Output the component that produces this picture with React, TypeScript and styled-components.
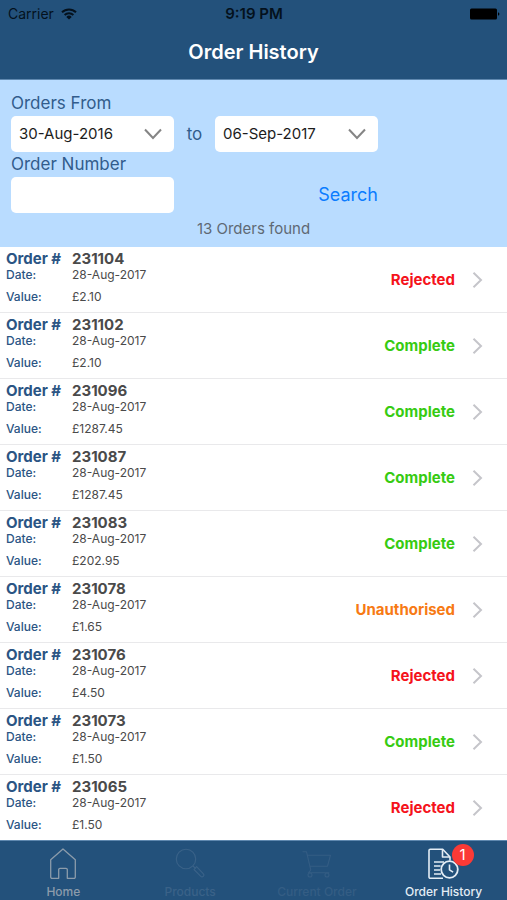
import React, { useState } from "react";
import styled, { createGlobalStyle } from "styled-components";

const GlobalStyle = createGlobalStyle`
  *, *::before, *::after { box-sizing: border-box; }
  body { margin: 0; background: #ffffff; }
  body, button, input, select { font-family: Inter, "Liberation Sans", sans-serif; }
`;

const navy = "#23517b";
const rule = "#5f88af";

const Screen = styled.div`
  display: flex;
  flex-direction: column;
  height: 100vh;
  overflow: hidden;
`;

const Header = styled.header`
  flex: none;
  background: ${navy};
  border-bottom: 1px solid ${rule};
`;

const StatusBar = styled.div`
  display: grid;
  grid-template-columns: 1fr auto 1fr;
  align-items: center;
  height: 27px;
  padding: 0 7px 0 8px;
  font-size: 14px;
  line-height: 16px;
  color: #04111d;
`;

const Carrier = styled.span`
  display: flex;
  align-items: center;
  gap: 7px;
`;

const Clock = styled.span`
  font-size: 15px;
  font-weight: 600;
`;

const Battery = styled.svg`
  justify-self: end;
`;

const Title = styled.h1`
  margin: 0;
  padding: 12px 0 14px;
  font-size: 20px;
  line-height: 26px;
  font-weight: 600;
  text-align: center;
  color: #ffffff;
`;

const Filters = styled.form`
  flex: none;
  padding: 12px 11px 8px;
  background: #b9dcff;
`;

const FilterGrid = styled.div`
  display: grid;
  grid-template-columns: 163px 41px 163px;
  row-gap: 1px;
  align-items: center;
`;

const FieldLabel = styled.label`
  grid-column: 1 / -1;
  height: 23px;
  font-size: 17px;
  line-height: 22px;
  color: #325c8c;
`;

const To = styled.span`
  font-size: 17px;
  line-height: 22px;
  text-align: center;
  color: #325c8c;
`;

const SelectWrap = styled.div`
  position: relative;
`;

const DateSelect = styled.select`
  display: block;
  width: 100%;
  height: 36px;
  padding: 0 36px 2px 8px;
  border: 0;
  border-radius: 5px;
  appearance: none;
  background: #ffffff;
  font-size: 15px;
  color: #1c1c1c;
`;

const SelectArrow = styled.svg`
  position: absolute;
  right: 12px;
  top: 12px;
  pointer-events: none;
`;

const NumberInput = styled.input`
  width: 100%;
  height: 36px;
  padding: 0 8px;
  border: 0;
  border-radius: 5px;
  background: #ffffff;
  font-size: 15px;
  color: #1c1c1c;
`;

const SearchButton = styled.button`
  grid-column: 3;
  justify-self: end;
  padding: 0;
  border: 0;
  background: none;
  font-size: 18px;
  line-height: 24px;
  color: #0b7cff;
  cursor: pointer;
`;

const Found = styled.p`
  margin: 6px 0 0;
  font-size: 15px;
  line-height: 20px;
  text-align: center;
  color: #5f6974;
`;

const OrderList = styled.ul`
  flex: 1;
  min-height: 0;
  margin: 0;
  padding: 0;
  list-style: none;
  overflow-y: auto;
  scrollbar-width: none;
`;

const OrderItem = styled.li`
  border-bottom: 1px solid #e9e9eb;
`;

const OrderLink = styled.a`
  display: flex;
  align-items: center;
  height: 65px;
  padding: 0 24px 0 6px;
  text-decoration: none;
`;

const Details = styled.dl`
  flex: 1;
  display: grid;
  grid-template-columns: 66px 1fr;
  grid-template-rows: 16px 22px 16px;
  margin: 0 0 3px;
  line-height: 16px;
`;

const Term = styled.dt<{ $lead?: boolean }>`
  font-size: ${(p) => (p.$lead ? 15 : 12)}px;
  font-weight: ${(p) => (p.$lead ? 700 : 500)};
  color: #2b5584;
`;

const Value = styled.dd<{ $lead?: boolean }>`
  margin: 0;
  font-size: ${(p) => (p.$lead ? 15 : 12)}px;
  font-weight: ${(p) => (p.$lead ? 700 : 400)};
  color: #4a4a4a;
`;

type Status = "Rejected" | "Complete" | "Unauthorised";

const statusColour: Record<Status, string> = {
  Rejected: "#f5121b",
  Complete: "#37cb12",
  Unauthorised: "#f77a14",
};

const StatusText = styled.span<{ $status: Status }>`
  margin-right: 17px;
  font-size: 15px;
  line-height: 20px;
  font-weight: 700;
  color: ${(p) => statusColour[p.$status]};
`;

const TabBar = styled.nav`
  flex: none;
  display: grid;
  grid-template-columns: repeat(4, 1fr);
  height: 60px;
  background: ${navy};
  border-top: 1px solid ${rule};
`;

const Tab = styled.a<{ $tone: string }>`
  display: flex;
  flex-direction: column;
  align-items: center;
  padding-top: 7px;
  font-size: 12px;
  line-height: 16px;
  font-weight: 500;
  white-space: nowrap;
  text-decoration: none;
  color: ${(p) => p.$tone};
`;

const TabIcon = styled.span`
  position: relative;
  display: block;
  height: 36px;

  svg { display: block; }
`;

const Badge = styled.span`
  position: absolute;
  left: 24px;
  top: -4px;
  width: 22px;
  height: 22px;
  border-radius: 50%;
  background: #fb3a36;
  font-size: 15px;
  line-height: 22px;
  font-weight: 400;
  text-align: center;
  color: #ffffff;
`;

interface Order {
  id: string;
  date: string;
  value: string;
  status: Status;
}

const orders: Order[] = [
  { id: "231104", date: "28-Aug-2017", value: "£2.10", status: "Rejected" },
  { id: "231102", date: "28-Aug-2017", value: "£2.10", status: "Complete" },
  { id: "231096", date: "28-Aug-2017", value: "£1287.45", status: "Complete" },
  { id: "231087", date: "28-Aug-2017", value: "£1287.45", status: "Complete" },
  { id: "231083", date: "28-Aug-2017", value: "£202.95", status: "Complete" },
  { id: "231078", date: "28-Aug-2017", value: "£1.65", status: "Unauthorised" },
  { id: "231076", date: "28-Aug-2017", value: "£4.50", status: "Rejected" },
  { id: "231073", date: "28-Aug-2017", value: "£1.50", status: "Complete" },
  { id: "231065", date: "28-Aug-2017", value: "£1.50", status: "Rejected" },
];

const WifiIcon = () => (
  <svg width="16" height="12" viewBox="0 0 16 12" fill="none" stroke="currentColor" aria-hidden="true">
    <path d="M1 4.3a10 10 0 0 1 14 0" strokeWidth="2" />
    <path d="M3.6 7a6.3 6.3 0 0 1 8.8 0" strokeWidth="1.9" />
    <path d="M8 11.6 5.3 8.9a3.9 3.9 0 0 1 5.4 0Z" fill="currentColor" stroke="none" />
  </svg>
);

const BatteryIcon = () => (
  <Battery width="30" height="12" viewBox="0 0 30 12" fill="#000" role="img" aria-label="Battery full">
    <rect x="0" y="0.5" width="27" height="11" rx="1.5" />
    <path d="M28 4.3c1.9.4 1.9 3 0 3.4Z" />
  </Battery>
);

const DownArrow = () => (
  <SelectArrow width="18" height="12" viewBox="0 0 18 12" fill="none" stroke="#858585" strokeWidth="2" aria-hidden="true">
    <path d="M1 1.5 9 10l8-8.5" />
  </SelectArrow>
);

const RowArrow = () => (
  <svg width="11" height="18" viewBox="0 0 11 18" fill="none" stroke="#c5c5ca" strokeWidth="2" aria-hidden="true">
    <path d="m1.5 1.7 7.5 7.3-7.5 7.3" />
  </svg>
);

const HomeIcon = () => (
  <svg width="28" height="32" viewBox="0 0 28 32" fill="none" stroke="currentColor" strokeWidth="1.3" strokeLinejoin="round" aria-hidden="true">
    <path d="M1.7 11.8 14 1l12.3 10.8V29a1.3 1.3 0 0 1-1.3 1.3h-6.7v-8.7a1.3 1.3 0 0 0-1.3-1.3h-6a1.3 1.3 0 0 0-1.3 1.3v8.7H3A1.3 1.3 0 0 1 1.7 29Z" />
  </svg>
);

const SearchIcon = () => (
  <svg width="30" height="32" viewBox="0 0 30 32" fill="none" stroke="currentColor" strokeWidth="1.1" strokeLinejoin="round" aria-hidden="true">
    <circle cx="11" cy="11" r="9.7" />
    <path d="m18 18 2.7 2.7M19 21.5l2.6-2.8 6.8 7.2c1.4 1.6-.9 4-2.6 2.5Z" />
  </svg>
);

const CartIcon = () => (
  <svg width="30" height="32" viewBox="0 0 30 32" fill="none" stroke="currentColor" strokeWidth="1.1" strokeLinejoin="round" aria-hidden="true">
    <path d="M.5 3.8h4l4.3 18.4M5.3 7.2h23.2l-3 11H7.9M8.8 22.2l-2.5 2.6h21" />
    <circle cx="8" cy="27" r="2" />
    <circle cx="25" cy="27" r="2" />
  </svg>
);

const HistoryIcon = () => (
  <svg width="32" height="32" viewBox="0 0 32 32" fill="none" stroke="currentColor" strokeWidth="1.6" strokeLinejoin="round" aria-hidden="true">
    <path d="M15 30.2H2.3A1.3 1.3 0 0 1 1 28.9V2.5a1.3 1.3 0 0 1 1.3-1.3h12.4L22 9v3.5" />
    <path d="M14.5 1.5V9H22" />
    <path d="M6 14h10M6 18h6.5M6 22h6M6 26h7" />
    <circle cx="21.5" cy="21.5" r="8.3" strokeWidth="1.8" />
    <path d="M21.5 16.5v5.3l3.6 2.4" />
  </svg>
);

interface DateFieldProps {
  id: string;
  label?: string;
  value: string;
  onChange: (value: string) => void;
}

const dates = ["30-Aug-2016", "06-Sep-2017"];

function DateField({ id, label, value, onChange }: DateFieldProps) {
  return (
    <SelectWrap>
      <DateSelect id={id} aria-label={label} value={value} onChange={(e) => onChange(e.target.value)}>
        {dates.map((d) => (
          <option key={d}>{d}</option>
        ))}
      </DateSelect>
      <DownArrow />
    </SelectWrap>
  );
}

export default function App() {
  const [from, setFrom] = useState("30-Aug-2016");
  const [to, setTo] = useState("06-Sep-2017");
  const [orderNumber, setOrderNumber] = useState("");

  return (
    <Screen>
      <GlobalStyle />
      <Header>
        <StatusBar>
          <Carrier>
            Carrier <WifiIcon />
          </Carrier>
          <Clock>9:19 PM</Clock>
          <BatteryIcon />
        </StatusBar>
        <Title>Order History</Title>
      </Header>

      <Filters onSubmit={(e) => e.preventDefault()}>
        <FilterGrid>
          <FieldLabel htmlFor="from-date">Orders From</FieldLabel>
          <DateField id="from-date" value={from} onChange={setFrom} />
          <To>to</To>
          <DateField id="to-date" label="Orders to" value={to} onChange={setTo} />
          <FieldLabel htmlFor="order-number">Order Number</FieldLabel>
          <NumberInput id="order-number" value={orderNumber} onChange={(e) => setOrderNumber(e.target.value)} />
          <SearchButton type="submit">Search</SearchButton>
        </FilterGrid>
        <Found>13 Orders found</Found>
      </Filters>

      <OrderList>
        {orders.map((order) => (
          <OrderItem key={order.id}>
            <OrderLink href={`#order-${order.id}`}>
              <Details>
                <Term $lead>Order #</Term>
                <Value $lead>{order.id}</Value>
                <Term>Date:</Term>
                <Value>{order.date}</Value>
                <Term>Value:</Term>
                <Value>{order.value}</Value>
              </Details>
              <StatusText $status={order.status}>{order.status}</StatusText>
              <RowArrow />
            </OrderLink>
          </OrderItem>
        ))}
      </OrderList>

      <TabBar aria-label="Main">
        <Tab href="#home" $tone="#8c9cab">
          <TabIcon><HomeIcon /></TabIcon>
          Home
        </Tab>
        <Tab href="#products" $tone="#3a6288">
          <TabIcon><SearchIcon /></TabIcon>
          Products
        </Tab>
        <Tab href="#current-order" $tone="#345d84">
          <TabIcon><CartIcon /></TabIcon>
          Current Order
        </Tab>
        <Tab href="#order-history" $tone="#e4edf5" aria-current="page">
          <TabIcon>
            <HistoryIcon />
            <Badge>1</Badge>
          </TabIcon>
          Order History
        </Tab>
      </TabBar>
    </Screen>
  );
}
